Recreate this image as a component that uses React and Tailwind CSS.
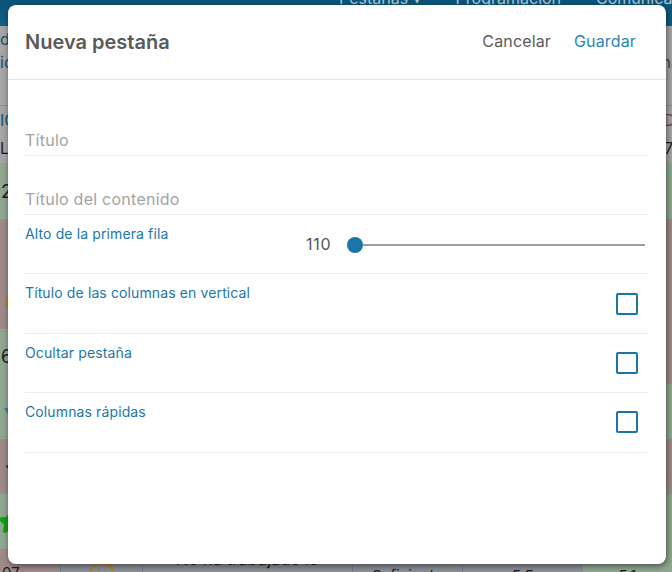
import { Star, Smile } from 'lucide-react'

const GREEN = 'bg-[#8fa78f]'
const RED = 'bg-[#9f8a8a]'

const filas = [
  { alto: 'h-[56px]', izq: GREEN, der: GREEN, marca: <span className="text-[18px] text-[#1c1c1c] ml-[1px]">2</span> },
  { alto: 'h-[55px]', izq: RED, der: RED },
  { alto: 'h-[55px]', izq: RED, der: RED, marca: <span className="ml-[5px] w-5 h-5 rounded-full bg-[#b5861f]"></span> },
  { alto: 'h-[55px]', izq: GREEN, der: RED, marca: <span className="text-[18px] text-[#1c1c1c] ml-[1px]">6</span> },
  { alto: 'h-[55px]', izq: GREEN, der: GREEN, marca: <span className="ml-[4px] mb-[2px] w-0 h-0 border-x-[4px] border-x-transparent border-t-[6px] border-t-[#3f7fa8]"></span> },
  { alto: 'h-[55px]', izq: RED, der: RED, marca: <span className="ml-[6px] w-[3px] h-[3px] rounded-full bg-[#333333]"></span> },
  { alto: 'h-[55px]', izq: GREEN, der: GREEN, marca: <Star className="w-[26px] h-[26px] shrink-0 -ml-[2px] text-[#12a012]" fill="currentColor" /> },
]

function Fondo() {
  return (
    <div className="w-[672px] h-[572px] overflow-hidden bg-[#a6a6a6] text-[#1c1c1c]">
      <div className="h-[26px] flex items-end pb-[16px] pl-[339px] gap-[35px] bg-gradient-to-b from-[#0a5478] to-[#0f5f85] text-[16px] text-[#b4c8d3] whitespace-nowrap">
        <span className="w-[86px]">Pestañas ▾</span>
        <span>Programación</span>
        <span>Comunicación</span>
      </div>

      <div className="h-[80px] flex justify-between border-b border-[#8c8c8c] text-[16px] text-[#17506f]">
        <div className="pt-[2px] leading-[23px]">
          <div>d</div>
          <div>ic</div>
        </div>
        <div className="pt-[24px] -mr-[8px]">na</div>
      </div>

      <div className="h-[57px] flex justify-between text-[16px]">
        <div className="leading-[28px]">
          <div className="text-[#17506f]">IC</div>
          <div>L</div>
        </div>
        <div className="leading-[28px] text-right">
          <div className="text-[#7d3b3b] -mr-[3px]">D</div>
          <div className="-mr-[4px]">7.</div>
        </div>
      </div>

      {filas.map((fila, i) => (
        <div key={i} className={`${fila.alto} flex`}>
          <div className={`flex-1 flex items-center overflow-hidden ${fila.izq}`}>{fila.marca}</div>
          <div className={`flex-1 ${fila.der}`}></div>
        </div>
      ))}

      <div className="grid grid-cols-[60px_82px_210px_110px_121px_89px] h-[30px] text-[15px] text-center bg-[#8b8f96]">
        <div className={`${RED} pt-[13px] text-left pl-[2px]`}>07</div>
        <div className="border-l border-[#6f7f92] flex justify-center pt-[12px]">
          <Smile className="w-7 h-7 shrink-0 text-[#b5861f]" strokeWidth={1.6} />
        </div>
        <div className="border-l border-[#6f7f92] text-[16.5px]">
          <div className="-mt-[2px]">No ha trabajado lo</div>
        </div>
        <div className="border-l border-[#6f7f92] pt-[16px]">Suficiente</div>
        <div className="border-l border-[#6f7f92] pt-[16px]">5.5</div>
        <div className={`${GREEN} pt-[16px]`}>5.1</div>
      </div>
    </div>
  )
}

function Campo({ texto }) {
  return (
    <input
      type="text"
      placeholder={texto}
      className="block w-full h-[32px] border-b border-[#e8eef5] text-[16px] tracking-[0.25px] text-[#555555] placeholder:text-[#a3a3a3] outline-none"
    />
  )
}

function Fila({ etiqueta, alto, children }) {
  return (
    <div className={`${alto} pt-[9px] flex items-start justify-between border-b border-[#e8eef5]`}>
      <span className="text-[14px] leading-5 tracking-[0.12px] text-[#1a77a8]">{etiqueta}</span>
      {children}
    </div>
  )
}

function Casilla({ margen = 'mt-[9px]' }) {
  return <input type="checkbox" className={`appearance-none block w-[22px] h-[22px] ${margen} mr-[10px] rounded-[2px] border-2 border-[#1a76a8] bg-white`} />
}

export default function App() {
  return (
    <div className="relative w-[672px] h-[572px] overflow-hidden font-['Inter',sans-serif]">
      <Fondo />

      <div className="absolute left-2 top-[5px] w-[658px] h-[559px] rounded-[8px] bg-white shadow-[1px_2px_6px_rgba(0,0,0,0.5)]">
        <div className="h-[75px] flex items-center justify-between pl-[17px] pr-[30px] border-b border-[#e5e5e5]">
          <h2 className="text-[20px] font-semibold text-[#5a5a5a]">Nueva pestaña</h2>
          <div className="flex gap-[23px] text-[16px] tracking-[0.15px] -mt-[2px]">
            <button className="text-[#5a5a5a]">Cancelar</button>
            <button className="text-[#2a86b2]">Guardar</button>
          </div>
        </div>

        <div className="pl-[17px] pr-[18px]">
          <div className="pt-[44px]">
            <Campo texto="Título" />
          </div>
          <div className="pt-[27px]">
            <Campo texto="Título del contenido" />
          </div>

          <Fila etiqueta="Alto de la primera fila" alto="h-[59px]">
            <div className="flex items-center h-6 mt-[9px] mr-[3px]">
              <span className="w-[41px] -mt-[2px] text-[16px] tracking-[0.8px] text-[#555555]">110</span>
              <span className="w-4 h-4 rounded-full bg-[#1a76a8]"></span>
              <span className="w-[282px] h-[2px] bg-[#9e9e9e]"></span>
            </div>
          </Fila>
          <Fila etiqueta="Título de las columnas en vertical" alto="h-[60px]">
            <Casilla margen="mt-[10px]" />
          </Fila>
          <Fila etiqueta="Ocultar pestaña" alto="h-[59px]">
            <Casilla />
          </Fila>
          <Fila etiqueta="Columnas rápidas" alto="h-[60px]">
            <Casilla />
          </Fila>
        </div>
      </div>
    </div>
  )
}
